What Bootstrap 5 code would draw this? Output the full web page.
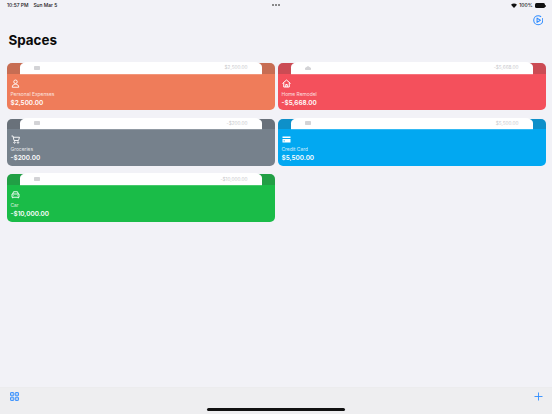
<!DOCTYPE html>
<html lang="en">
<head>
<meta charset="utf-8">
<title>Spaces</title>
<link href="https://cdn.jsdelivr.net/npm/bootstrap@5.3.0/dist/css/bootstrap.min.css" rel="stylesheet">
<style>
html,body{height:100%;margin:0}
body{background:#f2f2f7;font-family:Inter,"Liberation Sans",sans-serif;overflow:hidden}
.screen{width:552px;height:414px}
.statusbar{height:11px;padding:0 6px 0 7px;font-size:4.9px;color:#111;font-weight:500;line-height:11px;position:relative}
.datebit{margin-left:5px}
.dots{position:absolute;left:272px;top:4px;display:flex;gap:1px}
.dots i{width:2px;height:2px;border-radius:50%;background:#666;display:block}
.batt{width:10px;height:5px;border-radius:1.5px;background:#111;display:block}
.nub{width:1px;height:2px;background:#555;display:block;margin-left:.5px}
.topbar{height:12px;padding:1px 9px 0 0;margin-top:3px}
.page-title{font-size:13.4px;font-weight:700;color:#0a0a0a;margin:5px 0 0 8.5px;line-height:18px;height:18px}
.gridwrap{display:grid;grid-template-columns:267.5px 267.5px;column-gap:3.5px;row-gap:8.4px;padding-left:7px;margin-top:14px}
.space{height:47.3px;border-radius:5px;position:relative;color:#fff;padding:16px 0 0 3.5px}
.tabtop{position:absolute;left:0;right:0;top:0;height:10.5px;border-radius:5px 5px 0 0;background:rgba(60,60,60,.22)}
.slip{position:absolute;left:13px;right:13px;top:-1px;height:11.500px;background:#fff;border-radius:8px 8px 0 0/5px 5px 0 0;box-shadow:0 .6px 0 rgba(255,255,255,.4);display:flex;justify-content:space-between;align-items:center;padding:0 14px;font-size:4.7px;color:#c9c9cc}
.slipicon{width:6px;height:4px;background:#d3d3d6;border-radius:.7px;display:block}
.ico{display:block;width:9px;height:9px;margin:0 0 2.500px 0}
.name{font-size:4.9px;line-height:6px;opacity:.8;display:block}
.amt{font-size:6.4px;font-weight:600;line-height:9px;margin-top:2px;display:block}
.c1{background:#ef7c5a}.c2{background:#f4505c}.c3{background:#76818c}.c4{background:#02a8f1}.c5{background:#1abc48}
.bottombar{position:absolute;left:0;right:0;bottom:0;height:27px;background:#eeeef0;border-top:1px solid #ececee}
.grip{position:absolute;left:207px;top:20px;width:138px;height:2.5px;border-radius:2px;background:#111}
.gridicon{position:absolute;left:10px;top:4px}
.plusicon{position:absolute;left:533.500px;top:4px}
</style>
</head>
<body>
<div class="screen position-relative">
  <div class="statusbar d-flex justify-content-between align-items-center">
    <div><span>10:57 PM</span><span class="datebit">Sun Mar 5</span></div>
    <div class="dots"><i></i><i></i><i></i></div>
    <div class="d-flex align-items-center" style="gap:2px">
      <svg width="6" height="5" viewBox="0 0 12 10"><path d="M6 10 0 3.5C3.5.2 8.500.2 12 3.500z" fill="#111"/></svg>
      <span>100%</span><span class="d-flex align-items-center"><span class="batt"></span><span class="nub"></span></span>
    </div>
  </div>
  <div class="topbar d-flex justify-content-end">
    <svg width="10.500" height="10.500" viewBox="0 0 22 22" fill="none" stroke="#2f8cff" stroke-width="2.200"><circle cx="11" cy="11" r="9.500" stroke-dasharray="50 4"/><path d="M8.500 6.500 15.500 11l-7 4.500z" stroke-linejoin="round"/></svg>
  </div>
  <h1 class="page-title">Spaces</h1>
  <div class="gridwrap">
    <div class="space c1"><div class="tabtop"></div><div class="slip"><span class="slipicon"></span><span>$2,500.00</span></div>
      <svg class="ico" viewBox="0 0 18 18" fill="none" stroke="#fff" stroke-width="1.800"><circle cx="9" cy="5.500" r="3.500"/><path d="M2.500 16.500c0-4 2.500-6 6.500-6s6.500 2 6.500 6z"/></svg>
      <span class="name">Personal Expenses</span><span class="amt">$2,500.00</span></div>
    <div class="space c2"><div class="tabtop"></div><div class="slip"><svg class="slipicon" viewBox="0 0 6 4" style="background:none"><path d="M0 2 3 0l3 2v2H0z" fill="#d3d3d6"/></svg><span>-$5,668.00</span></div>
      <svg class="ico" viewBox="0 0 18 18" fill="none" stroke="#fff" stroke-width="2"><path d="M1 9 9 2l8 7M3.500 8v8h11V8M7.500 16v-5h3v5"/></svg>
      <span class="name">Home Remodel</span><span class="amt">-$5,668.00</span></div>
    <div class="space c3"><div class="tabtop"></div><div class="slip"><span class="slipicon"></span><span>-$200.00</span></div>
      <svg class="ico" viewBox="0 0 18 18" fill="none" stroke="#fff" stroke-width="1.800"><path d="M1 2h3l2 9h9l2-6.500H4.500"/><circle cx="7" cy="15" r="1.500"/><circle cx="14" cy="15" r="1.500"/></svg>
      <span class="name">Groceries</span><span class="amt">-$200.00</span></div>
    <div class="space c4"><div class="tabtop"></div><div class="slip"><span class="slipicon"></span><span>$5,500.00</span></div>
      <svg class="ico" viewBox="0 0 18 18"><path fill="#fff" d="M1 3h16v3H1zM1 8h16v7H1z"/><path fill="#02a8f1" d="M3 11h3v1.500H3z"/></svg>
      <span class="name">Credit Card</span><span class="amt">$5,500.00</span></div>
    <div class="space c5"><div class="tabtop"></div><div class="slip"><span class="slipicon"></span><span>-$10,000.00</span></div>
      <svg class="ico" viewBox="0 0 18 18" fill="none" stroke="#fff" stroke-width="1.800"><path d="M3.500 8 5 3.500h8L14.500 8M2 8h14v6.500H2zM3.500 14.500v2M14.500 14.500v2M5 11h1M12 11h1"/></svg>
      <span class="name">Car</span><span class="amt">-$10,000.00</span></div>
  </div>
  <div class="bottombar">
    <svg class="gridicon" width="9" height="9" viewBox="0 0 18 18" fill="#2f8cff" fill-opacity=".3" stroke="#2f8cff" stroke-width="1.800"><rect x="1" y="1" width="6.500" height="6.500" rx="1.200"/><rect x="10.500" y="1" width="6.500" height="6.500" rx="1.200"/><rect x="1" y="10.500" width="6.500" height="6.500" rx="1.200"/><rect x="10.500" y="10.500" width="6.500" height="6.500" rx="1.200"/></svg>
    <svg class="plusicon" width="9" height="9" viewBox="0 0 18 18" stroke="#2f8cff" stroke-width="1.800"><path d="M9 1v16M1 9h16"/></svg>
    <div class="grip"></div>
  </div>
</div>
<script src="https://cdn.jsdelivr.net/npm/bootstrap@5.3.0/dist/js/bootstrap.bundle.min.js"></script>
</body>
</html>
